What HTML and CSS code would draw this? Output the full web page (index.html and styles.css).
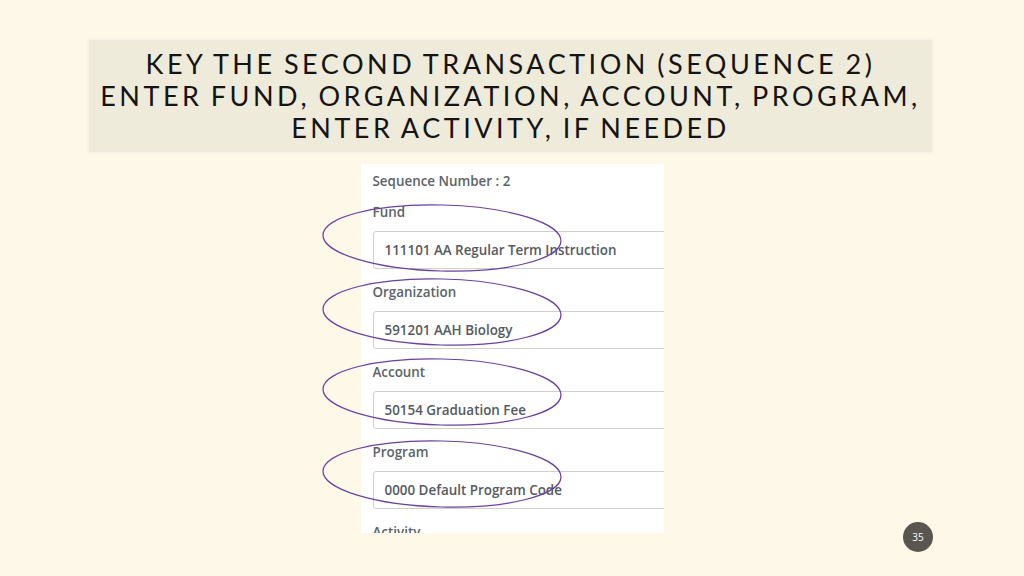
FILE: index.html
```html
<!DOCTYPE html>
<html lang="en">
<head>
<meta charset="utf-8">
<title>Key the second transaction</title>
<link rel="stylesheet" href="styles.css">
</head>
<body>
<main class="slide">
  <header class="title">
    <h1>KEY THE SECOND TRANSACTION (SEQUENCE 2)<br>ENTER FUND, ORGANIZATION, ACCOUNT, PROGRAM,<br>ENTER ACTIVITY, IF NEEDED</h1>
  </header>
  <section class="shot">
    <div class="seq">Sequence Number : 2</div>
    <div class="field">
      <div class="label">Fund</div>
      <div class="input">111101 AA Regular Term Instruction</div>
    </div>
    <div class="field">
      <div class="label">Organization</div>
      <div class="input">591201 AAH Biology</div>
    </div>
    <div class="field">
      <div class="label">Account</div>
      <div class="input">50154 Graduation Fee</div>
    </div>
    <div class="field">
      <div class="label">Program</div>
      <div class="input">0000 Default Program Code</div>
    </div>
    <div class="field">
      <div class="label">Activity</div>
    </div>
  </section>
  <svg class="marks" width="1024" height="576" viewBox="0 0 1024 576">
    <ellipse cx="442" cy="238" rx="119" ry="33" transform="rotate(1.5 442 238)"/>
    <ellipse cx="442" cy="312" rx="119" ry="33" transform="rotate(1.5 442 312)"/>
    <ellipse cx="442" cy="392" rx="119" ry="33" transform="rotate(1.5 442 392)"/>
    <ellipse cx="442" cy="474" rx="119" ry="33" transform="rotate(1.5 442 474)"/>
  </svg>
  <div class="page-num">35</div>
</main>
</body>
</html>
```
FILE: styles.css
```css
html, body {
  margin: 0;
  padding: 0;
}
body {
  background: #fdf8e7;
}
.slide {
  position: relative;
  width: 1024px;
  height: 576px;
  overflow: hidden;
  display: flex;
  flex-direction: column;
  align-items: center;
  padding-top: 38px;
  box-sizing: border-box;
  background: #fdf8e7;
}
.title {
  width: 847px;
  height: 116px;
  margin-right: 3px;
  box-sizing: border-box;
  background: #efebda;
  border: 2px solid #f7f3e6;
  display: flex;
  align-items: center;
  justify-content: center;
}
.title h1 {
  margin: 0;
  font-family: Lato, "Liberation Sans", sans-serif;
  font-weight: 400;
  font-size: 27px;
  line-height: 32px;
  letter-spacing: 3.5px;
  word-spacing: -2px;
  text-align: center;
  color: #141414;
}
.shot {
  margin-top: 10px;
  width: 303px;
  height: 369px;
  overflow: hidden;
  background: #ffffff;
  box-sizing: border-box;
  padding: 7px 0 0 12px;
  font-family: "Open Sans", "Liberation Sans", sans-serif;
  font-size: 13.4px;
}
.seq {
  height: 20px;
  line-height: 20px;
  font-weight: 600;
  color: #5b6369;
  margin-bottom: 11px;
  white-space: nowrap;
}
.field {
  height: 80px;
}
.label {
  height: 20px;
  line-height: 20px;
  font-weight: 600;
  color: #5b6369;
  margin-bottom: 9px;
}
.input {
  width: 330px;
  height: 38px;
  box-sizing: border-box;
  border: 1px solid #cfcfcf;
  border-radius: 3px;
  padding-left: 11px;
  line-height: 36px;
  font-weight: 600;
  color: #555a5e;
  white-space: nowrap;
}
.marks {
  position: absolute;
  left: 0;
  top: 0;
  pointer-events: none;
}
.marks ellipse {
  fill: none;
  stroke: #6b3fa0;
  stroke-width: 1.2;
}
.page-num {
  position: absolute;
  left: 903px;
  top: 522px;
  width: 30px;
  height: 30px;
  border-radius: 50%;
  background: #595650;
  color: #ffffff;
  font-family: "Open Sans", "Liberation Sans", sans-serif;
  font-size: 10px;
  line-height: 30px;
  text-align: center;
}
```
